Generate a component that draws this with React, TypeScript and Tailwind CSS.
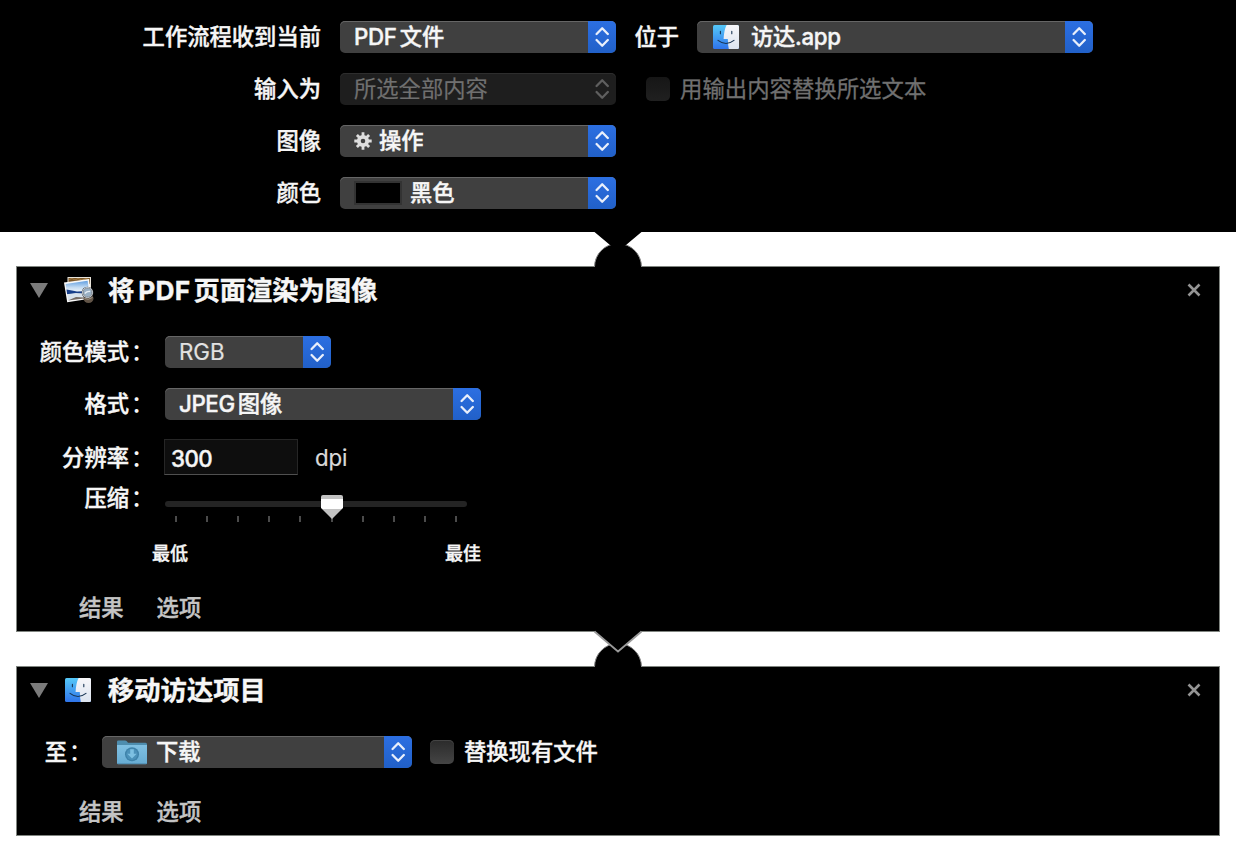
import type { ReactNode } from "react";
import clsx from "clsx";

function Stepper({ disabled = false }: { disabled?: boolean }) {
  return (
    <span
      className={clsx(
        "flex h-full w-7 shrink-0 items-center justify-center",
        disabled ? "text-[#5f5f5f]" : "bg-linear-to-b from-[#2c6fe2] to-[#2160c8] text-[#e9effb]",
      )}
    >
      <svg width="14" height="22" viewBox="0 0 14 22" fill="none" stroke="currentColor" strokeWidth="2.3" strokeLinecap="round" strokeLinejoin="round">
        <path d="M1.6 8 7.2 2.3 12.8 8M1.6 14 7.2 19.7 12.8 14" />
      </svg>
    </span>
  );
}

function Select({ children, className, disabled = false }: { children: ReactNode; className: string; disabled?: boolean }) {
  return (
    <button
      className={clsx(
        "flex h-8 shrink-0 items-center overflow-hidden rounded-[5px] pl-3.5 text-left",
        disabled
          ? "bg-[#1e1e1e] font-normal text-[#707070] shadow-[inset_0_1px_0_#2d2d2d] [-webkit-text-stroke:0.2px]"
          : "bg-[#404040] shadow-[inset_0_1px_0_#666]",
        className,
      )}
    >
      <span className="flex h-full flex-1 items-center whitespace-nowrap">{children}</span>
      <Stepper disabled={disabled} />
    </button>
  );
}

function Checkbox({ disabled = false }: { disabled?: boolean }) {
  return (
    <span
      className={clsx(
        "size-6 shrink-0 rounded-[5px] bg-linear-to-b",
        disabled ? "from-[#161616] to-[#202020]" : "from-[#2b2b2b] to-[#454545] shadow-[inset_0_1px_0_#444]",
      )}
    />
  );
}

function FinderIcon() {
  return (
    <svg width="26" height="24" viewBox="0 0 26 24" className="shrink-0">
      <defs>
        <linearGradient id="finder-blue" x1="0" y1="0" x2="0" y2="1">
          <stop offset="0" stopColor="#55c8f8" />
          <stop offset="1" stopColor="#2f74ea" />
        </linearGradient>
        <linearGradient id="finder-white" x1="0" y1="0" x2="0" y2="1">
          <stop offset="0" stopColor="#f7f7fa" />
          <stop offset="1" stopColor="#dce4ef" />
        </linearGradient>
      </defs>
      <rect width="26" height="24" rx="1.5" fill="url(#finder-blue)" />
      <path d="M13.6 0H24.5Q26 0 26 1.5V22.5Q26 24 24.5 24H15.8Q15 20 14.8 14H10.6Q11 5 13.6 0Z" fill="url(#finder-white)" />
      <path d="M7.4 6.3V8.7M18.8 6.3V8.7" stroke="#193553" strokeWidth="1.1" strokeLinecap="round" />
      <path d="M5 15.4Q13 21.6 21 15.4" fill="none" stroke="#193553" strokeWidth="1.1" strokeLinecap="round" />
    </svg>
  );
}

function PreviewIcon() {
  return (
    <svg width="30" height="28" viewBox="0 0 30 28" className="shrink-0">
      <defs>
        <linearGradient id="photo-sky" x1="0" y1="0" x2="0" y2="1">
          <stop offset="0" stopColor="#5f9de0" />
          <stop offset=".6" stopColor="#c5dcf2" />
          <stop offset="1" stopColor="#eef5fb" />
        </linearGradient>
      </defs>
      <path d="M3.5 1H27V20H3.5Z" fill="#e9e4da" />
      <path d="M4.5 2H26V8H4.5Z" fill="#7b5729" />
      <path d="M5 3.5 8 2.5 11 4 14 2.5 18 4 22 2.5 26 4" fill="none" stroke="#a57c40" />
      <path d="M0 6.5 25 3 27.5 22.5 3.2 26.2Z" fill="#f8f8f8" />
      <path d="M1.6 7.9 23.6 4.7 25 14 2.7 16Z" fill="url(#photo-sky)" />
      <path d="M2.5 13.5 8 14.5 13 15.5 24.8 15 25 17 3.1 18.3Z" fill="#183f8a" />
      <path d="M3.1 18.3 12 17 20 18 20 21 4.3 24.5Z" fill="#d9e3ec" />
      <path d="M4 24.5 12 21 20 21.5 20 22.6Z" fill="#756b64" />
      <ellipse cx="24.5" cy="22.5" rx="5" ry="4.6" fill="#625548" />
      <circle cx="23.5" cy="16.5" r="5" fill="#9ab0c4" stroke="#4a5057" strokeWidth="1.7" />
      <circle cx="23.5" cy="16.5" r="4.9" fill="none" stroke="#dfe4e8" strokeWidth="1" />
      <path d="M20.8 17.5Q23 15 26.2 15.5" fill="none" stroke="#e6edf4" strokeWidth="1.4" />
      <path d="M20.5 22.5Q24 24.5 28.5 21.5" fill="none" stroke="#a49788" />
    </svg>
  );
}

function DownloadsIcon() {
  return (
    <svg width="30" height="25" viewBox="0 0 30 25" className="shrink-0">
      <defs>
        <linearGradient id="folder" x1="0" y1="0" x2="0" y2="1">
          <stop offset="0" stopColor="#80c0e2" />
          <stop offset="1" stopColor="#67acd3" />
        </linearGradient>
      </defs>
      <path d="M0 23V1.8Q0 .5 1.3.5H8Q9 .5 9.8 1.3L11 2.7H28.5Q30 2.7 30 4.2V23Z" fill="#4e8dae" />
      <path d="M0 5H30V23Q30 24.2 28.8 24.2H1.2Q0 24.2 0 23Z" fill="url(#folder)" />
      <path d="M0 23.5H30" stroke="#5695b9" />
      <circle cx="15" cy="14.2" r="7" fill="#3e82a9" />
      <circle cx="15" cy="14.2" r="5.7" fill="#4b91b9" />
      <path d="M13.2 9.2H16.8V13.8H19.7L15 18.6 10.3 13.8H13.2Z" fill="#7dc0e2" />
    </svg>
  );
}

function GearIcon() {
  return (
    <svg width="18" height="18" viewBox="-9 -9 18 18" className="shrink-0">
      <path
        d="M0-8.7V-4M0 8.7V4M-8.7 0H-4M8.7 0H4M-6.1-6.1-3-3M6.1 6.1 3 3M-6.1 6.1-3 3M6.1-6.1 3-3"
        stroke="#dedede"
        strokeWidth="2.8"
      />
      <circle r="4.2" fill="none" stroke="#dedede" strokeWidth="3.8" />
    </svg>
  );
}

function Label({ children, className }: { children: ReactNode; className: string }) {
  return <span className={clsx("shrink-0 whitespace-nowrap text-right", className)}>{children}</span>;
}

function FieldLabel({ text, className }: { text: string; className: string }) {
  return (
    <span className={clsx("flex shrink-0 justify-end whitespace-nowrap", className)}>
      {text}
      <span className="w-[13px] pl-0.5 [-webkit-text-stroke:0px]">：</span>
    </span>
  );
}

function Header({ icon, children }: { icon: ReactNode; children: ReactNode }) {
  return (
    <header className="flex h-[46px] items-center pr-[18px] pl-[13px]">
      <svg width="18" height="15" viewBox="0 0 18 15" className="shrink-0">
        <path d="M0 0H18L9 15Z" fill="#7b7b7b" />
      </svg>
      <span className="ml-4 flex w-[30px]">{icon}</span>
      <h2 className="ml-3.5 flex flex-1 pt-0.5 text-[26.3px] leading-8 font-bold whitespace-nowrap">{children}</h2>
      <svg width="14" height="14" viewBox="0 0 14 14">
        <path d="M1.5 1.5 12.5 12.5M12.5 1.5 1.5 12.5" stroke="#949494" strokeWidth="2.6" />
      </svg>
    </header>
  );
}

function Tabs() {
  return (
    <nav className="flex gap-[33px] pl-[62px] leading-8 text-[#c4c4c4]">
      <span>结果</span>
      <span>选项</span>
    </nav>
  );
}

function Socket() {
  return (
    <svg width="48" height="24" viewBox="0 0 48 24" className="absolute -top-6 left-[577px]">
      <path d="M.5 24C.5 11 11 .5 24 .5S47.5 11 47.5 24Z" fill="#000" stroke="#888" strokeWidth="1" />
      <path d="M1 24H47" stroke="#000" strokeWidth="2" />
    </svg>
  );
}

function Plug({ outlined = false, className }: { outlined?: boolean; className: string }) {
  return (
    <svg width="50" height="23" viewBox="0 0 50 23" className={clsx("absolute z-10", className)}>
      <path d={outlined ? "M0 0H50L48.5 1 25 21.5 1.5 1Z" : "M0 0H50L48.5 1 33 14H17L1.5 1Z"} fill="#000" />
      {outlined && <path d="M1.5 1.5 25 21.5 48.5 1.5" fill="none" stroke="#999" strokeWidth="1.8" />}
    </svg>
  );
}

const ticks = [0, 1, 2, 3, 4, 5, 6, 7, 8, 9];

function Slider() {
  return (
    <div className="relative ml-[23px] w-[302px] pt-[19px]">
      <div className="h-1.5 rounded-full bg-[#242424]" />
      <div className="mt-[9px] flex justify-between px-2.5">
        {ticks.map((t) => (
          <span key={t} className="h-1.5 w-0.5 bg-[#4b4b4b]" />
        ))}
      </div>
      <svg width="22" height="24" viewBox="0 0 22 24" className="absolute top-[13px] left-[156px]">
        <path d="M2 0H20Q22 0 22 2V13L11 24 0 13V2Q0 0 2 0Z" fill="#c2c2c2" />
        <path d="M0 4H22V12.5L20.5 14H1.5L0 12.5Z" fill="#fff" />
      </svg>
    </div>
  );
}

export default function App() {
  return (
    <main className="h-[860px] w-[1236px] overflow-hidden bg-white font-['Inter','Noto_Sans_CJK_SC',sans-serif] text-[22.3px] leading-8 font-medium text-[#f6f6f6] [-webkit-text-stroke:0.4px]">
      <section className="relative flex h-[232px] flex-col gap-5 bg-black pt-[21px]">
        <div className="flex h-8">
          <Label className="w-[321px]">工作流程收到当前</Label>
          <Select className="ml-[19px] w-[276px]">
            <span className="tracking-[-0.3px]">PDF</span>
            <span className="ml-[3px]">文件</span>
          </Select>
          <Label className="ml-[18px] w-[45px] text-left">位于</Label>
          <Select className="ml-[18px] w-[396px]">
            <span className="mr-3 ml-[2px]">
              <FinderIcon />
            </span>
            <span className="tracking-[-0.3px]">访达.app</span>
          </Select>
        </div>
        <div className="flex h-8 items-center">
          <Label className="w-[321px]">输入为</Label>
          <Select disabled className="ml-[19px] w-[276px]">
            所选全部内容
          </Select>
          <span className="ml-[30px] flex items-center gap-2.5 text-[22.4px] font-normal text-[#707070] [-webkit-text-stroke:0.3px]">
            <Checkbox disabled />
            用输出内容替换所选文本
          </span>
        </div>
        <div className="flex h-8">
          <Label className="w-[321px]">图像</Label>
          <Select className="ml-[19px] w-[276px]">
            <span className="mr-[7px]">
              <GearIcon />
            </span>
            操作
          </Select>
        </div>
        <div className="flex h-8">
          <Label className="w-[321px]">颜色</Label>
          <Select className="ml-[19px] w-[276px]">
            <span className="mr-2 h-6 w-12 border-2 border-[#333] bg-black" />
            黑色
          </Select>
        </div>
        <Plug className="top-[231px] left-[593px]" />
      </section>

      <section className="relative mx-4 mt-[34px] h-[366px] border border-[#808580] bg-black">
        <Socket />
        <Header icon={<PreviewIcon />}>
          <span>将</span>
          <span className="mr-[3px] ml-1 tracking-[0.2px]">PDF</span>
          <span>页面渲染为图像</span>
        </Header>
        <div className="mt-[23px] flex h-8">
          <FieldLabel className="w-[125px]" text="颜色模式" />
          <Select className="ml-[23px] w-[166px] font-normal text-[#e2e2e2] [-webkit-text-stroke:0.2px]">RGB</Select>
        </div>
        <div className="mt-5 flex h-8">
          <FieldLabel className="w-[125px]" text="格式" />
          <Select className="ml-[23px] w-[316px]">
            <span className="tracking-[-0.4px]">JPEG</span>
            <span className="ml-[3px]">图像</span>
          </Select>
        </div>
        <div className="mt-[19px] flex h-9 items-center">
          <FieldLabel className="w-[125px] pt-0.5" text="分辨率" />
          <input
            defaultValue="300"
            className="ml-[22px] h-9 w-[134px] border border-[#262626] border-b-[#505050] bg-[#0e0e0e] pt-0.5 pl-1.5 tracking-[-0.5px] outline-none"
          />
          <span className="ml-[17px] pt-0.5 font-normal tracking-[-0.2px] text-[#dadada] [-webkit-text-stroke:0.2px]">dpi</span>
        </div>
        <div className="mt-[7px] flex h-[54px]">
          <FieldLabel className="w-[125px]" text="压缩" />
          <Slider />
        </div>
        <div className="mt-1 flex justify-between pr-[738px] pl-[135px] text-[18px] leading-7">
          <span>最低</span>
          <span>最佳</span>
        </div>
        <div className="mt-6">
          <Tabs />
        </div>
        <Plug outlined className="top-[363px] left-[576px]" />
      </section>

      <section className="relative mx-4 mt-[34px] h-[170px] border border-[#808580] bg-black">
        <Socket />
        <Header
          icon={
            <span className="pl-px">
              <FinderIcon />
            </span>
          }
        >
          移动访达项目
        </Header>
        <div className="mt-[23px] flex h-8 items-center">
          <FieldLabel className="w-[63px]" text="至" />
          <Select className="ml-[22px] w-[310px]">
            <span className="mr-[9px] ml-px">
              <DownloadsIcon />
            </span>
            下载
          </Select>
          <span className="ml-[18px] flex items-center gap-2.5">
            <Checkbox />
            替换现有文件
          </span>
        </div>
        <div className="mt-7">
          <Tabs />
        </div>
      </section>
    </main>
  );
}
